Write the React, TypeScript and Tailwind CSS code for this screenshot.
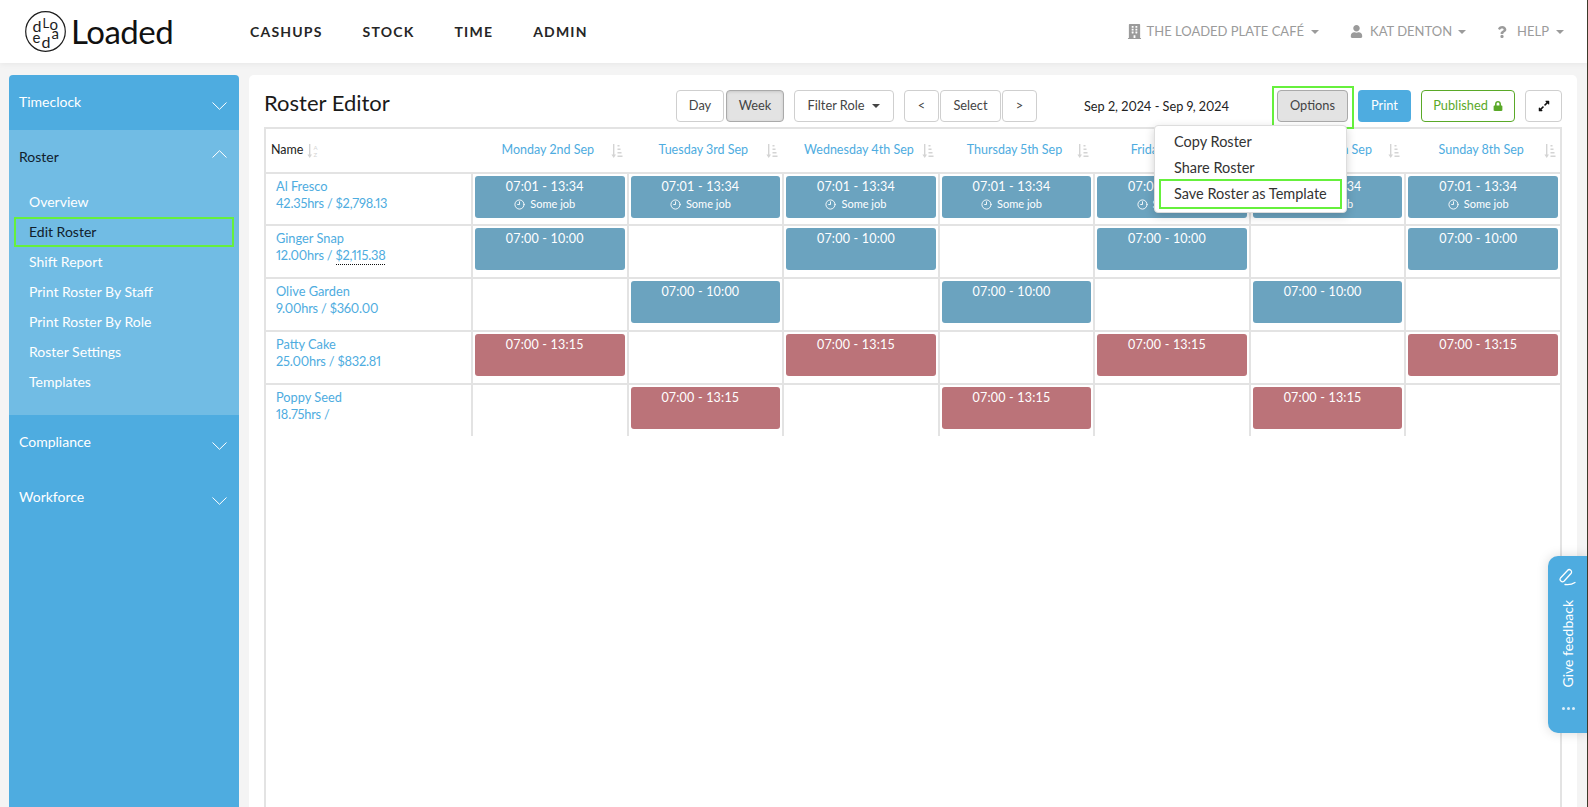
import { Clock9 } from 'lucide-react'
import { FaBuilding, FaUser, FaQuestion, FaLock, FaExpandAlt } from 'react-icons/fa'

const days = ['Monday 2nd Sep', 'Tuesday 3rd Sep', 'Wednesday 4th Sep', 'Thursday 5th Sep', 'Friday 6th Sep', 'Saturday 7th Sep', 'Sunday 8th Sep']

type Row = {
  name: string
  hours: string
  pay?: string
  dotted?: boolean
  time: string
  job?: boolean
  red?: boolean
  on: number[]
  height: string
}

const rows: Row[] = [
  { name: 'Al Fresco', hours: '42.35hrs / ', pay: '$2,798.13', time: '07:01 - 13:34', job: true, on: [0, 1, 2, 3, 4, 5, 6], height: 'h-[52px]' },
  { name: 'Ginger Snap', hours: '12.00hrs / ', pay: '$2,115.38', dotted: true, time: '07:00 - 10:00', on: [0, 2, 4, 6], height: 'h-[53px]' },
  { name: 'Olive Garden', hours: '9.00hrs / ', pay: '$360.00', time: '07:00 - 10:00', on: [1, 3, 5], height: 'h-[53px]' },
  { name: 'Patty Cake', hours: '25.00hrs / ', pay: '$832.81', time: '07:00 - 13:15', red: true, on: [0, 2, 4, 6], height: 'h-[53px]' },
  { name: 'Poppy Seed', hours: '18.75hrs / ', time: '07:00 - 13:15', red: true, on: [1, 3, 5], height: 'h-[51px]' },
]

function Caret() {
  return <span className="inline-block w-0 h-0 border-x-[4px] border-x-transparent border-t-[4px] border-t-current" />
}

function SortIcon({ az }: { az?: boolean }) {
  return (
    <svg width="12" height="14" viewBox="0 0 12 14" className="shrink-0 text-[#d4d4d4]" fill="currentColor">
      <path d="M2 0h1.400v10.500H5L2.700 14 .4 10.500H2z" />
      {az ? (
        <>
          <text x="6.500" y="5.500" fontSize="6">A</text>
          <text x="6.500" y="13" fontSize="6">Z</text>
        </>
      ) : (
        <path d="M6.500 1h2v1.500h-2zM6.500 4.500h3V6h-3zM6.500 8h4v1.500h-4zM6.500 11.500h5V13h-5z" />
      )}
    </svg>
  )
}

function Chevron({ up }: { up?: boolean }) {
  return (
    <svg width="15" height="8" viewBox="0 0 15 8" fill="none" stroke="white" strokeWidth="1" className={up ? '-mt-[7px]' : 'mt-[7px]'}>
      <path d={up ? 'M.5 7.500 7.500.7l7 6.800' : 'M.5.5l7 6.800 7-6.800'} />
    </svg>
  )
}

function NavSection({ label, open }: { label: string; open?: boolean }) {
  return (
    <div className={`flex justify-between items-center h-[55px] pl-[10px] pr-[12px] text-[14px] ${open ? 'text-[#10202c]' : 'text-white'}`}>
      <span className="-mt-[2px]">{label}</span>
      <Chevron up={open} />
    </div>
  )
}

function Shift({ row }: { row: Row }) {
  return (
    <div className={`mt-[2px] mx-[2px] h-[42px] rounded-[3px] text-white text-center pr-[10px] ${row.red ? 'bg-[#bb7379]' : 'bg-[#6ba3bf]'}`}>
      <div className="text-[12.500px] leading-[16px] pt-[3px] tracking-[0.2px] tabular-nums">{row.time}</div>
      {row.job && (
        <div className="flex items-center justify-center gap-[5px] text-[11px] leading-[16px] mt-[1px]">
          <Clock9 size={11} strokeWidth={2} />
          <span>Some job</span>
        </div>
      )}
    </div>
  )
}

function Btn({ children, className = '' }: { children: React.ReactNode; className?: string }) {
  return (
    <button className={`h-[32px] flex items-center justify-center border border-[#cfcfcf] rounded-[4px] text-[12.800px] text-[#444] bg-white ${className}`}>
      {children}
    </button>
  )
}

export default function App() {
  return (
    <div className="relative h-[807px] w-[1588px] overflow-hidden bg-[#f4f4f4] proportional-nums font-['Lato','Liberation_Sans',sans-serif]">
      <header className="h-[63px] bg-white flex items-center shadow-[0_1px_6px_rgba(0,0,0,0.06)]">
        <div className="flex items-center w-[250px] pl-[25px]">
          <svg width="41" height="41" viewBox="0 0 41 41" className="text-[#1d1d1d] shrink-0" fill="currentColor" fontFamily="Lato, sans-serif">
            <circle cx="20.500" cy="20.500" r="19.800" fill="none" stroke="currentColor" strokeWidth="1.200" />
            <text x="7.500" y="21" fontSize="16">d</text>
            <text x="17.500" y="17" fontSize="13">L</text>
            <text x="24.500" y="18.500" fontSize="15">o</text>
            <text x="7.500" y="32" fontSize="15">e</text>
            <text x="16.500" y="37" fontSize="16">d</text>
            <text x="26.500" y="28" fontSize="15">a</text>
          </svg>
          <span className="ml-[5px] text-[33px] leading-none text-[#111] tracking-[-0.5px]">Loaded</span>
        </div>
        <nav className="flex items-center gap-[40px] text-[14px] font-bold tracking-[1.200px] text-[#262626]">
          <span>CASHUPS</span>
          <span>STOCK</span>
          <span>TIME</span>
          <span>ADMIN</span>
        </nav>
        <div className="ml-auto flex items-center pr-[24px] text-[13px] text-[#9b9b9b]">
          <FaBuilding size={15} className="mr-[5px]" />
          <span className="mr-[7px]">THE LOADED PLATE CAFÉ</span>
          <Caret />
          <FaUser size={13} className="ml-[31px] mr-[7px]" />
          <span className="mr-[6px]">KAT DENTON</span>
          <Caret />
          <FaQuestion size={12} className="ml-[30px] mr-[9px]" />
          <span className="mr-[7px]">HELP</span>
          <Caret />
        </div>
      </header>

      <div className="flex h-[744px] pt-[12px] pl-[9px] gap-[10px]">
        <aside className="w-[230px] bg-[#4eace0] rounded-t-[4px] overflow-hidden">
          <NavSection label="Timeclock" />
          <div className="bg-[#71bce4] h-[285px]">
            <NavSection label="Roster" open />
            <ul className="text-[14px] text-white pt-[2px]">
              {['Overview', 'Edit Roster', 'Shift Report', 'Print Roster By Staff', 'Print Roster By Role', 'Roster Settings', 'Templates'].map(item => (
                item === 'Edit Roster'
                  ? <li key={item} className="h-[30px] leading-[26px] mx-[5px] pl-[13px] text-[#10202c] border-2 border-[#66f03c]">{item}</li>
                  : <li key={item} className="h-[30px] leading-[30px] pl-[20px]">{item}</li>
              ))}
            </ul>
          </div>
          <NavSection label="Compliance" />
          <NavSection label="Workforce" />
        </aside>

        <main className="w-[1328px] h-[732px] bg-white rounded-t-[5px] px-[15px]">
          <div className="relative flex items-start h-[52px] pt-[15px]">
            <h1 className="text-[22px] -mt-[4px] text-[#1a1a1a] w-[412px]">Roster Editor</h1>
            <Btn className="w-[48px]">Day</Btn>
            <Btn className="w-[58px] ml-[2px] !bg-[#e3e3e3] !border-[#aaa] shadow-[inset_0_1px_3px_rgba(0,0,0,0.12)]">Week</Btn>
            <Btn className="w-[100px] ml-[10px] gap-[8px]">Filter Role <Caret /></Btn>
            <Btn className="w-[35px] ml-[10px]">&lt;</Btn>
            <Btn className="w-[61px] ml-[1px]">Select</Btn>
            <Btn className="w-[35px] ml-[1px]">&gt;</Btn>
            <span className="ml-[47px] w-[193px] text-[12.700px] leading-[32px] text-[#222]">Sep 2, 2024 - Sep 9, 2024</span>
            <Btn className="w-[71px] !bg-[#e3e3e3] !border-[#aaa]">Options</Btn>
            <button className="h-[32px] w-[53px] ml-[10px] rounded-[4px] bg-[#4eace0] text-white text-[12.800px]">Print</button>
            <button className="h-[32px] w-[94px] ml-[10px] rounded-[4px] border border-[#5aa928] text-[#5aa928] text-[12.800px] flex items-center justify-center gap-[5px]">
              Published <FaLock size={10} />
            </button>
            <Btn className="w-[37px] ml-[10px]"><FaExpandAlt size={12} className="text-[#111]" /></Btn>

            {/* green highlight round Options */}
            <div className="absolute left-[1008px] top-[11px] w-[82px] h-[43px] border-2 border-[#66f03c] z-10" />

            <div className="absolute left-[890px] top-[50px] w-[193px] h-[88px] z-20 bg-white border border-[#ddd] rounded-[4px] shadow-[0_3px_10px_rgba(0,0,0,0.18)] text-[14.500px] text-[#333] pt-[3px]">
              <div className="h-[26px] leading-[26px] pl-[19px]">Copy Roster</div>
              <div className="h-[26px] leading-[26px] pl-[19px]">Share Roster</div>
              <div className="h-[30px] leading-[26px] mx-[4px] pl-[13px] border-2 border-[#66f03c] -mt-[2px]">Save Roster as Template</div>
            </div>
          </div>

          <div className="h-[680px] border-x-2 border-t-2 border-[#e3e3e3]">
            <div className="grid grid-cols-[205px_repeat(7,minmax(0,1fr))] h-[45px] border-b-2 border-[#e3e3e3] text-[12.500px]">
              <div className="flex items-center gap-[4px] pl-[5px] text-[#222]">Name <SortIcon az /></div>
              {days.map(d => (
                <div key={d} className="flex items-center pl-[14px] pr-[4px] text-[#4eace0] whitespace-nowrap overflow-hidden">
                  <span className="flex-1 text-center">{d}</span>
                  <SortIcon />
                </div>
              ))}
            </div>
            {rows.map((r, i) => (
              <div key={r.name} className={`grid grid-cols-[205px_repeat(7,minmax(0,1fr))] ${r.height} ${i < rows.length - 1 ? 'border-b-2 border-[#e3e3e3]' : ''}`}>
                <div className="pl-[10px] pt-[4px] text-[12.800px] leading-[17px] text-[#4eace0]">
                  <div>{r.name}</div>
                  <div className="tracking-[-0.2px]">
                    {r.hours}
                    {r.pay && <span className={r.dotted ? 'border-b border-dotted border-[#111] pb-[1px]' : ''}>{r.pay}</span>}
                  </div>
                </div>
                {days.map((d, j) => (
                  <div key={d} className="border-l-2 border-[#e3e3e3]">
                    {r.on.includes(j) && <Shift row={r} />}
                  </div>
                ))}
              </div>
            ))}
          </div>
        </main>
      </div>

      <div className="absolute right-0 top-[556px] w-[40px] h-[177px] bg-[#4eace0] rounded-l-[10px] shadow-[0_0_12px_rgba(0,0,0,0.15)] text-white flex flex-col items-center pt-[12px]">
        <svg width="18" height="18" viewBox="0 0 18 18" fill="none" stroke="currentColor" strokeWidth="1.300" strokeLinecap="round">
          <path d="M1.500 10 8.500 2.500a2 2 0 0 1 3.500 3L5 13.200A2.400 2.400 0 0 1 1.500 10z" />
          <path d="M6 16.500c4 .5 7 0 10-2" />
        </svg>
        <span className="mt-[14px] text-[14px] leading-none [writing-mode:vertical-rl] rotate-180">Give feedback</span>
        <span className="mt-[20px] flex gap-[2px]">
          <i className="w-[3px] h-[3px] rounded-full bg-white/80" />
          <i className="w-[3px] h-[3px] rounded-full bg-white/80" />
          <i className="w-[3px] h-[3px] rounded-full bg-white/80" />
        </span>
      </div>
      {/* edge of the capture */}
      <div className="absolute right-0 top-0 bottom-0 w-px bg-[#3d3a2a]" />
    </div>
  )
}
